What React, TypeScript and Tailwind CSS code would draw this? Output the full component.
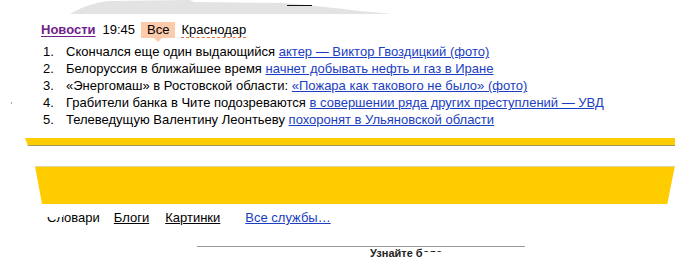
import React from 'react';

type Part = { text: string; link?: boolean };

const news: Part[][] = [
  [{ text: 'Скончался еще один выдающийся ' }, { text: 'актер — Виктор Гвоздицкий (фото)', link: true }],
  [{ text: 'Белоруссия в ближайшее время ' }, { text: 'начнет добывать нефть и газ в Иране', link: true }],
  [{ text: '«Энергомаш» в Ростовской области: ' }, { text: '«Пожара как такового не было» (фото)', link: true }],
  [{ text: 'Грабители банка в Чите подозреваются ' }, { text: 'в совершении ряда других преступлений — УВД', link: true }],
  [{ text: 'Телеведущую Валентину Леонтьеву ' }, { text: 'похоронят в Ульяновской области', link: true }],
];

function TopShape() {
  return (
    <svg width="675" height="15" viewBox="0 0 675 15" className="block">
      <path
        d="M70 14 C80 8 92 3 108 1 L190 0 L194 2 L282 3 C310 5 335 8 360 11 C372 12 382 13 392 14 Z"
        fill="#e3e3e3"
      />
      <rect x="287" y="5" width="25" height="1" fill="#111" />
    </svg>
  );
}

export default function App() {
  return (
    <div className="relative w-[675px] h-[258px] overflow-hidden bg-white font-['Liberation_Sans',Arial,sans-serif] text-[13px] leading-[17px] text-black">
      <TopShape />

      {/* header */}
      <div className="flex items-center h-[17px] mt-[6px] pl-[41px]">
        <a className="font-bold text-[#70218a] underline underline-offset-2">Новости</a>
        <span className="ml-[7px]">19:45</span>
        <span className="relative ml-[6px] bg-[#fccbab] px-[6px] h-[16px] leading-[16px]">
          Все
          <span className="absolute left-[13px] top-[16px] w-0 h-0 border-x-[4px] border-x-transparent border-t-[4px] border-t-[#fccbab]" />
        </span>
        <span className="ml-[6px] border-b border-dashed border-[#e0703a] leading-[15px]">Краснодар</span>
      </div>

      {/* news list */}
      <ol className="mt-[5px]">
        {news.map((row, i) => (
          <li key={i} className="flex h-[17px]">
            <span className="w-[43px] flex items-center">
              {i === 3 && <span className="ml-[11px] w-[1px] h-[2px] bg-[#8aa0c8]" />}
            </span>
            <span className="w-[23px]">{i + 1}.</span>
            <span className="whitespace-nowrap">
              {row.map((p, j) =>
                p.link ? (
                  <a key={j} className="text-[#1a3dc1] underline underline-offset-1">{p.text}</a>
                ) : (
                  <span key={j}>{p.text}</span>
                )
              )}
            </span>
          </li>
        ))}
      </ol>

      {/* yellow bands */}
      <div className="mt-[10px] ml-[25px] h-[8px] bg-[#ffcc00] border-b border-[#9c9a62] [clip-path:polygon(0_0,100%_0,100%_100%,3px_100%)]" />
      <div className="mt-[20px] ml-[35px] h-[38px] bg-[#ffcc00] border-t border-[#ddd79a] [clip-path:polygon(0_0,100%_0,99.5%_40%,98.8%_100%,7px_100%)]" />

      {/* services */}
      <div className="relative flex items-center h-[17px] mt-[5px] pl-[47px]">
        <a>Словари</a>
        <span className="absolute left-[45px] top-0 w-[18px] h-[8px] bg-white" />
        <a className="ml-[14px] underline underline-offset-1">Блоги</a>
        <a className="ml-[16px] underline underline-offset-1">Картинки</a>
        <a className="ml-[25px] text-[#1a3dc1] underline underline-offset-1">Все службы…</a>
      </div>

      <div className="mt-[20px] ml-[197px] w-[328px] border-t border-[#999]" />
      <div className="pl-[370px] pt-[1px] text-[11px] leading-[11px] font-bold text-[#222] whitespace-nowrap flex">
        <span>Узнайте б</span>
        <span className="inline-block h-[4px] overflow-hidden">оле</span>
      </div>
    </div>
  );
}
